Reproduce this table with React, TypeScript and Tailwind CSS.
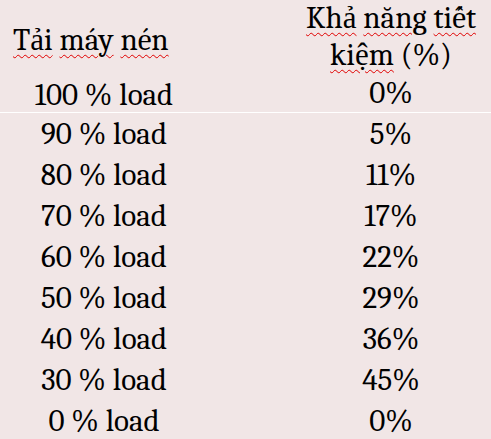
import React from "react";

const rows: [string, string][] = [
  ["90 % load", "5%"],
  ["80 % load", "11%"],
  ["70 % load", "17%"],
  ["60 % load", "22%"],
  ["50 % load", "29%"],
  ["40 % load", "36%"],
  ["30 % load", "45%"],
  ["0 % load", "0%"],
];

function W({ children }: { children: React.ReactNode }) {
  return (
    <span className="underline decoration-wavy decoration-[#e00000] decoration-1 underline-offset-[4px]">
      {children}
    </span>
  );
}

export default function App() {
  return (
    <div className="font-serif w-[491px] h-[439px] overflow-hidden bg-[#f1e6e6] text-black text-[31px]">
      <div className="h-[112px] flex flex-col">
        <div className="flex h-[74px]">
          <div className="w-[208px] pl-[13px] pt-[7px] leading-[37px] flex items-center">
            <span>
              <W>Tải</W> <W>máy</W> <W>nén</W>
            </span>
          </div>
          <div className="flex-1 pl-[83px] text-center leading-[37px]">
            <div>
              <W>Khả</W> <W>năng</W> <W>tiết</W>
            </div>
            <div>
              <W>kiệm</W> (%)
            </div>
          </div>
        </div>
        <div className="flex h-[38px] leading-[38px]">
          <div className="w-[208px] text-center pt-[2px]">100 % load</div>
          <div className="flex-1 pl-[83px] text-center">0%</div>
        </div>
      </div>
      <div className="h-px bg-white" />
      <div className="pt-px">
        {rows.map(([a, b]) => (
          <div key={a} className="flex h-[41px] leading-[41px]">
            <div className="w-[208px] text-center">{a}</div>
            <div className="flex-1 pl-[83px] text-center">{b}</div>
          </div>
        ))}
      </div>
    </div>
  );
}
